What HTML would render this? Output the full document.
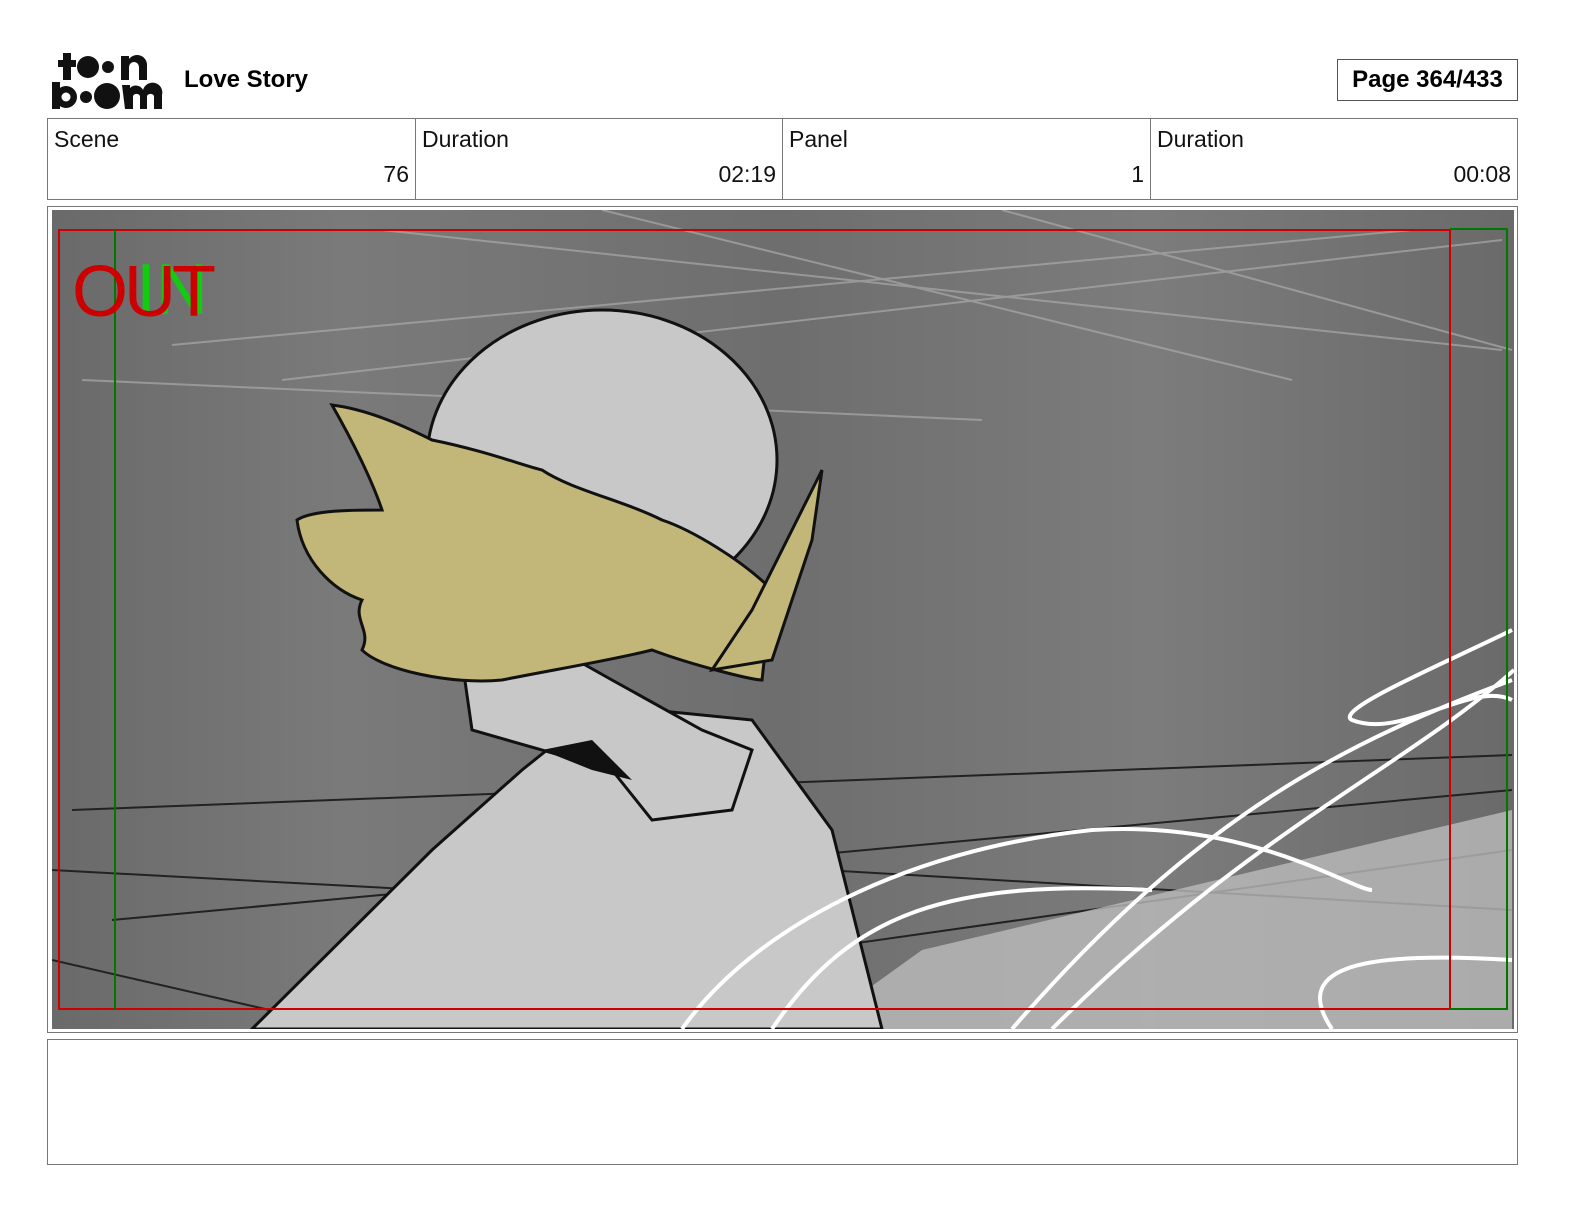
<!DOCTYPE html>
<html><head><meta charset="utf-8"><style>
body{margin:0;width:1584px;height:1224px;background:#fff;position:relative;font-family:"Liberation Sans",sans-serif;overflow:hidden}
.abs{position:absolute}
.cell{position:absolute;top:118px;height:82px;border:1px solid #777;box-sizing:border-box}
.cell .l{position:absolute;left:6px;top:7px;font-size:23px;color:#111}
.cell .v{position:absolute;right:6px;top:42px;font-size:23px;color:#111}
</style></head><body>
<svg class="abs" style="left:50px;top:50px" width="115" height="62" viewBox="0 0 115 62">
<g fill="#111">
<rect x="13" y="3" width="8" height="27"/><rect x="8" y="10" width="18" height="7"/>
<circle cx="38" cy="17" r="11"/><circle cx="58" cy="17" r="6"/>
<path d="M71 6h8v3a10 10 0 0 1 18 6v15h-8v-13a4 4 0 0 0-10 0v13h-8z"/>
<rect x="2" y="32" width="8" height="27"/><circle cx="16" cy="47" r="11"/><circle cx="16" cy="47" r="4.5" fill="#fff"/>
<circle cx="36" cy="47" r="6"/><circle cx="57" cy="46" r="13"/>
<path d="M72 35h8v3a8 8 0 0 1 13 2a8 8 0 0 1 19 5v14h-8v-13a4 4 0 0 0-7 0v13h-7v-13a4 4 0 0 0-7 0v13h-8z"/>
</g></svg>
<div class="abs" style="left:184px;top:66px;font-size:24px;font-weight:bold">Love Story</div>
<div class="abs" style="left:1337px;top:59px;width:181px;height:42px;border:1px solid #555;box-sizing:border-box;font-size:24px;font-weight:bold;text-align:center;line-height:40px">Page 364/433</div>
<div class="cell" style="left:47px;width:369px"><span class="l">Scene</span><span class="v">76</span></div>
<div class="cell" style="left:415px;width:368px"><span class="l">Duration</span><span class="v">02:19</span></div>
<div class="cell" style="left:782px;width:369px"><span class="l">Panel</span><span class="v">1</span></div>
<div class="cell" style="left:1150px;width:368px"><span class="l">Duration</span><span class="v">00:08</span></div>
<div class="abs" style="left:47px;top:206px;width:1471px;height:827px;border:1px solid #777;box-sizing:border-box"></div>
<svg class="abs" style="left:52px;top:210px" width="1462" height="819" viewBox="0 0 1462 819">
<defs><linearGradient id="g" x1="0" x2="1"><stop offset="0" stop-color="#6a6a6a"/><stop offset=".2" stop-color="#7a7a7a"/><stop offset=".5" stop-color="#6e6e6e"/><stop offset=".75" stop-color="#7c7c7c"/><stop offset="1" stop-color="#6a6a6a"/></linearGradient></defs>
<rect width="1462" height="819" fill="url(#g)"/>
<g stroke="#aaa" stroke-width="2" fill="none" opacity=".7">
<path d="M120 135L1360 20M230 170L1450 30M30 170L930 210M330 20L1450 140M950 0L1460 140M550 0L1240 170"/></g>
<g stroke="#222" stroke-width="2" fill="none"><path d="M20 600L1460 545M0 660L560 690M60 710L1460 580M0 750L300 819M600 650L1460 700M200 819L1460 640"/></g>
<path d="M870 740L1460 600L1460 819L760 819Z" fill="#bbb" opacity=".8"/>
<path d="M200 819L380 640L470 560L520 520L600 500L700 510L780 620L830 819Z" fill="#c8c8c8" stroke="#111" stroke-width="3"/>
<path d="M400 380L560 470L650 520L700 540L680 600L600 610L560 560L420 520Z" fill="#c8c8c8" stroke="#111" stroke-width="3"/>
<ellipse cx="550" cy="250" rx="175" ry="150" fill="#c8c8c8" stroke="#111" stroke-width="3"/>
<path d="M280 195C300 230 320 270 330 300C300 300 260 300 245 310C250 350 280 380 310 390C300 410 320 420 310 440C330 460 400 475 450 470C500 460 560 450 600 440C640 455 700 470 710 470L720 380C690 350 640 320 610 310C570 290 520 280 490 260C470 255 430 240 380 230C360 220 320 200 280 195Z" fill="#c2b679" stroke="#111" stroke-width="3"/>
<path d="M700 400L770 260L760 330L720 450L660 460Z" fill="#c2b679" stroke="#111" stroke-width="3"/>
<path d="M490 540L540 530L580 570L540 560Z" fill="#111"/>
<g stroke="#fff" stroke-width="4" fill="none"><path d="M630 819C700 720 850 640 1040 620C1200 610 1300 680 1320 680M720 819C800 700 900 670 1100 680M960 819C1150 600 1300 530 1460 470M1000 819C1200 620 1350 560 1462 460M1460 420C1400 450 1280 500 1300 510C1350 530 1420 470 1460 490M1280 819C1240 760 1300 740 1460 750"/></g>
<rect x="7" y="20" width="1391" height="779" fill="none" stroke="#c00" stroke-width="2"/>
<path d="M63 20V799M1398 19H1455V799H1398" fill="none" stroke="#070" stroke-width="2"/>
<text x="84" y="104" font-size="72" fill="#1c1" font-family="Liberation Sans">IN</text>
<text x="20" y="106" font-size="72" fill="#c00" font-family="Liberation Sans" letter-spacing="-4">OUT</text>
</svg>
<div class="abs" style="left:47px;top:1039px;width:1471px;height:126px;border:1px solid #777;box-sizing:border-box"></div>
</body></html>
